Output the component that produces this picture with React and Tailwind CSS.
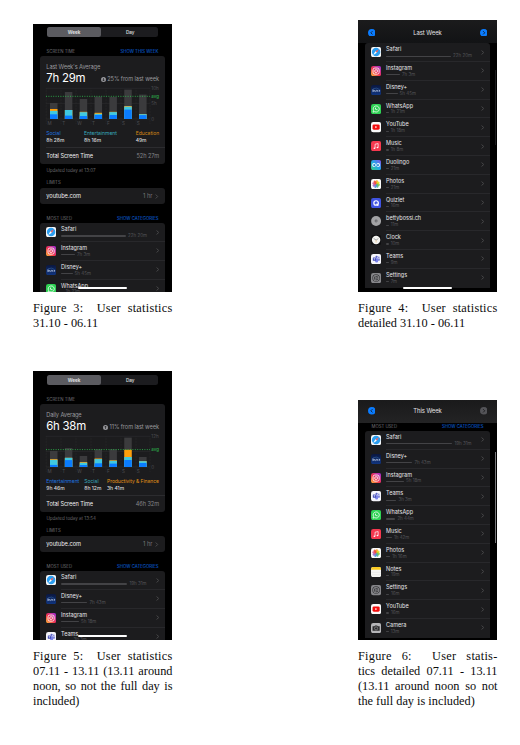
import React from "react";

const ICONS = {
  safari: (
    <>
      <rect width="20" height="20" rx="4.5" fill="#f4f6f8" />
      <circle cx="10" cy="10" r="8.3" fill="#2b9ff2" />
      <path d="M15.5 4.5 11.5 11.5 8.5 8.5z" fill="#f0625f" />
      <path d="M4.5 15.5 8.5 8.5l3 3z" fill="#fff" />
    </>
  ),
  instagram: (
    <>
      <rect width="20" height="20" rx="4.5" fill="url(#ig)" />
      <rect x="4" y="4" width="12" height="12" rx="3.6" fill="none" stroke="#fff" strokeWidth="1.6" />
      <circle cx="10" cy="10" r="2.8" fill="none" stroke="#fff" strokeWidth="1.6" />
      <circle cx="13.6" cy="6.4" r=".9" fill="#fff" />
    </>
  ),
  disney: (
    <>
      <rect width="20" height="20" rx="4.5" fill="url(#dis)" />
      <path d="M4 7.5Q11 4 17 9" fill="none" stroke="#4d8fd0" strokeWidth=".7" />
      <path d="M3.5 9v4.2c2.6 0 2.6-4 0-4M7 10v3M8.5 13h1.3v-2.6h1.4M12 13v-2.5q1.5 0 1.5 2.5M15 11.5h3M16.5 10v3" fill="none" stroke="#dbe9ff" strokeWidth="1.1" />
    </>
  ),
  whatsapp: (
    <>
      <rect width="20" height="20" rx="4.5" fill="#2fd254" />
      <path d="M4 16l1-3.3a6 6 0 1 1 2.3 2.3z" fill="none" stroke="#fff" strokeWidth="1.5" />
      <path d="M7.8 7.3c-.8 2.2 2.4 5.4 4.8 4.9l.4-1.2-1.6-.9-.8.7-1.4-1.4.6-.8-.7-1.5z" fill="#fff" />
    </>
  ),
  youtube: (
    <>
      <rect width="20" height="20" rx="4.5" fill="#fafafa" />
      <rect x="3" y="5" width="14" height="10" rx="2.6" fill="#f20d0d" />
      <path d="M8.5 7.8v4.4l3.8-2.2z" fill="#fff" />
    </>
  ),
  music: (
    <>
      <rect width="20" height="20" rx="4.5" fill="#f6384f" />
      <path d="M8 14V6.3l6-1.3v7.6" fill="none" stroke="#fff" strokeWidth="1.4" />
      <ellipse cx="6.7" cy="14.2" rx="1.8" ry="1.4" fill="#fff" />
      <ellipse cx="12.7" cy="12.8" rx="1.8" ry="1.4" fill="#fff" />
    </>
  ),
  duolingo: (
    <>
      <rect width="20" height="20" rx="4.5" fill="url(#duo)" />
      <rect x="2.5" y="6" width="6.8" height="7.5" rx="3" fill="#e9fbff" />
      <rect x="10.7" y="6" width="6.8" height="7.5" rx="3" fill="#e9fbff" />
      <rect x="4.6" y="7.8" width="3.4" height="4.4" rx="1.6" fill="#2a7fd0" />
      <rect x="12" y="7.8" width="3.4" height="4.4" rx="1.6" fill="#2a7fd0" />
    </>
  ),
  photos: (
    <>
      <rect width="20" height="20" rx="4.5" fill="#fafafa" />
      {["#f7a21b", "#e8d81f", "#8fc83e", "#4bb58d", "#4a90d9", "#9a6bc4", "#d65a9a", "#ee4b3a"].map((c, i) => (
        <rect key={c} x="7.7" y="2.4" width="4.6" height="7.4" rx="2.3" fill={c} opacity=".9" transform={`rotate(${i * 45 + 15} 10 10)`} />
      ))}
    </>
  ),
  quizlet: (
    <>
      <rect width="20" height="20" rx="4.5" fill="#4053e0" />
      <circle cx="10" cy="9.8" r="4.4" fill="none" stroke="#fff" strokeWidth="2.4" />
      <path d="M10.8 11.3l3.6 3.6" stroke="#fff" strokeWidth="2.4" />
    </>
  ),
  betty: (
    <>
      <circle cx="10" cy="10" r="9.8" fill="#a3a3a5" />
      <circle cx="10" cy="10" r="2.9" fill="#67676a" />
      <circle cx="10" cy="10" r="1.1" fill="#a3a3a5" />
    </>
  ),
  clock: (
    <>
      <rect width="20" height="20" rx="4.5" fill="#101012" />
      <circle cx="10" cy="10" r="8.3" fill="#f3f3f0" />
      <path d="M5.2 6.8 10 10l4.5-3" fill="none" stroke="#555" strokeWidth="1" />
      <path d="M10 10v5" stroke="#ec9a2c" strokeWidth=".7" />
    </>
  ),
  teams: (
    <>
      <rect width="20" height="20" rx="4.5" fill="#f5f5fb" />
      <circle cx="11" cy="5.6" r="2.2" fill="#5b63c9" />
      <circle cx="15.4" cy="6.4" r="1.5" fill="#6d75d4" />
      <path d="M8 8.5h6v5a3 3 0 0 1-6 0z" fill="#7b83eb" />
      <path d="M14.4 8.8H17v3.4a2 2 0 0 1-2.6 1z" fill="#5059c9" />
      <rect x="3.6" y="6.8" width="6.4" height="6.4" rx="1" fill="#454fb8" />
      <path d="M5.2 8.8h3.2M6.8 8.8v3" stroke="#fff" strokeWidth=".9" />
    </>
  ),
  settings: (
    <>
      <rect width="20" height="20" rx="4.5" fill="#86868a" />
      <circle cx="10" cy="10" r="7.4" fill="#38383b" />
      <circle cx="10" cy="10" r="5.4" fill="none" stroke="#a8a8ac" strokeWidth="1.3" />
      <circle cx="10" cy="10" r="2" fill="none" stroke="#a8a8ac" strokeWidth="1" />
      <path d="M12 10h3.4M9 8.3 7.3 5.3M9 11.7l-1.7 3" stroke="#a8a8ac" strokeWidth="1" />
    </>
  ),
  notes: (
    <>
      <rect width="20" height="20" rx="4.5" fill="#f7f7f5" />
      <path d="M0 5.5V4.5A4.5 4.5 0 0 1 4.5 0h11A4.5 4.5 0 0 1 20 4.5V5.5z" fill="#fbcb22" />
      <path d="M0 10.5h20M0 15h20" stroke="#dcdcdc" strokeWidth=".6" />
    </>
  ),
  camera: (
    <>
      <rect width="20" height="20" rx="4.5" fill="#b5b5b8" />
      <path d="M3 6.5h3.8L8 4.8h4l1.2 1.7H17v8.7H3z" fill="#2b2b2d" />
      <circle cx="10" cy="10.6" r="3.1" fill="none" stroke="#b5b5b8" strokeWidth="1" />
    </>
  ),
};

function AppIcon({ name }) {
  return (
    <svg viewBox="0 0 20 20" className="size-[10.2px] shrink-0">
      <defs>
        <linearGradient id="ig" x1="0" y1="1" x2="1" y2="0">
          <stop offset="0" stopColor="#fdbb3a" />
          <stop offset=".45" stopColor="#f0324f" />
          <stop offset="1" stopColor="#9a2ee0" />
        </linearGradient>
        <linearGradient id="dis" x1="0" y1="0" x2="0" y2="1">
          <stop offset="0" stopColor="#0a1740" />
          <stop offset="1" stopColor="#103580" />
        </linearGradient>
        <linearGradient id="duo" x1="0" y1="1" x2="1" y2="0">
          <stop offset="0" stopColor="#35d07a" />
          <stop offset=".5" stopColor="#23a7e8" />
          <stop offset="1" stopColor="#8a4bea" />
        </linearGradient>
      </defs>
      {ICONS[name]}
    </svg>
  );
}

function Chevron() {
  return (
    <svg viewBox="0 0 4 6" className="h-[5px] w-[3.4px] shrink-0">
      <path d="M.8.6 3.2 3 .8 5.4" fill="none" stroke="#5a5a5e" strokeWidth=".9" />
    </svg>
  );
}

function AppRow({ icon, name, bar, time, last }) {
  return (
    <div className="flex h-[18.8px] shrink-0 pl-[6px]">
      <div className="pt-[4px]">
        <AppIcon name={icon} />
      </div>
      <div className={`ml-[4.9px] flex grow items-center border-b-[0.6px] pr-[6px] ${last ? "border-transparent" : "border-[#28282b]"}`}>
        <div className="flex h-full grow flex-col pt-[3px]">
          <div className="h-[6.8px] text-[5.5px] leading-[7px] text-[#e8e8ea]">{name}</div>
          <div className="flex h-[6px] items-center gap-[2px]">
            <div className="h-[1.2px] rounded-full bg-[#434346]" style={{ width: bar }} />
            <span className="text-[4.5px] leading-[6px] text-[#545458]">{time}</span>
          </div>
        </div>
        <Chevron />
      </div>
    </div>
  );
}

function AppList({ rows }) {
  return (
    <div className="mx-[7px] flex flex-col overflow-hidden rounded-t-[3px] bg-[#1c1c1e]">
      {rows.map((r, i) => (
        <AppRow key={r[1]} icon={r[0]} name={r[1]} bar={r[2]} time={r[3]} last={i === rows.length - 1} />
      ))}
    </div>
  );
}

function HomeBar() {
  return <div className="absolute bottom-[3.2px] left-[45px] h-[1.8px] w-[49px] rounded-full bg-white" />;
}

function Chart({ bars, avg, top, mid }) {
  const days = ["M", "T", "W", "T", "F", "S", "S"];
  return (
    <svg viewBox="0 0 119 40" className="mt-[1px] block h-[40px] w-[119px] overflow-visible font-['Inter',sans-serif]">
      <g stroke="#303033" strokeWidth=".5">
        <path d="M0 2.3H104M0 17.6H104M0 33H104" />
        <path d="M.2 2.3V38M15 2.3V38M30 2.3V38M45 2.3V38M60 2.3V38M75 2.3V38M90 2.3V38M104 2.3V38" strokeDasharray="1 .5" />
      </g>
      {bars.map(([t, o, c, b], i) => {
        const x = 4 + i * 14.85;
        return (
          <g key={i}>
            <rect x={x} y={2.3 + t} width="7.5" height={30.7 - t} fill="#3b3b3d" />
            <rect x={x} y={2.3 + o} width="7.5" height={30.7 - o} fill="#ff9f0a" />
            <rect x={x} y={2.3 + c} width="7.5" height={30.7 - c} fill="#40c8e0" />
            <rect x={x} y={2.3 + b} width="7.5" height={30.7 - b} fill="#0a7cff" />
          </g>
        );
      })}
      <path d={`M0 ${2.3 + avg}H104`} stroke="#2fc24f" strokeWidth="1" strokeDasharray="1 1.4" opacity=".8" />
      <g fill="#4b4b4f" fontSize="4.6">
        {days.map((d, i) => (
          <text key={i} x={1.4 + i * 14.9} y="39.3">{d}</text>
        ))}
        <text x="105.3" y="4.2">{top}</text>
        {mid && <text x="105.3" y="19.3">{mid}</text>}
        <text x="105.3" y="34.8">0</text>
      </g>
      <text x="105.3" y={3.8 + avg} fontSize="4.4" fontWeight="600" fill="#2a9c45">avg</text>
    </svg>
  );
}

function SectionHead({ left, right, className }) {
  return (
    <div className={`flex h-[6px] items-center justify-between px-[13.5px] text-[4.3px] leading-[6px] ${className}`}>
      <span className="text-[#727276]">{left}</span>
      <span className="text-[#0a6ae0]">{right}</span>
    </div>
  );
}

function StatsPhone({ pad, link, avgTitle, avg, delta, chart, legend, total, updated, rows, height }) {
  return (
    <div className={`relative w-[139px] overflow-hidden bg-black font-['Inter',sans-serif] ${height} ${pad}`}>
      <div className="mx-[14px] flex h-[10px] rounded-[2.5px] bg-[#1c1c1f] text-center text-[4.7px] leading-[10px] tracking-[-0.05px] text-[#e6e6e8]">
        <div className="w-[54px] rounded-[2.5px] bg-[#5b5b60] font-semibold">Week</div>
        <div className="grow pl-[1.5px] font-medium">Day</div>
      </div>
      <SectionHead left="SCREEN TIME" right={link} className="mt-[11.9px]" />
      <div className="mx-[7px] mt-[1.3px] h-[107.6px] rounded-[3px] bg-[#1c1c1e] pl-[6.3px]">
        <div className="h-[8px] pt-[6.4px] text-[5.7px] leading-[8px] tracking-[-0.13px] text-[#98989d]">{avgTitle}</div>
        <div className="mt-[7px] flex h-[14px] items-center justify-between pr-[6px]">
          <span className="text-[11.4px] leading-[14px] tracking-[-0.25px] text-white">{avg}</span>
          <span className="flex items-center gap-[1.3px] pt-[2.6px] text-[5.6px] leading-[8px] tracking-[-0.05px] text-[#98989d]">
            <svg viewBox="0 0 10 10" className="size-[5px]">
              <circle cx="5" cy="5" r="5" fill="#98989d" />
              <path d={delta[1]} fill="none" stroke="#1c1c1e" strokeWidth="1.4" />
            </svg>
            {delta[0]}
          </span>
        </div>
        <Chart {...chart} />
        <div className="mt-[3.6px] flex text-[5px] leading-[7px]">
          {legend.map(([label, value, color, width]) => (
            <div key={label} className={`shrink-0 whitespace-nowrap ${width}`}>
              <div className={`h-[7.7px] ${color}`}>{label}</div>
              <div className="font-medium text-[#d8d8da]">{value}</div>
            </div>
          ))}
        </div>
        <div className="mt-[2.6px] flex h-[17.4px] items-center justify-between border-t-[0.6px] border-[#2c2c2f] pr-[6px] text-[5.6px] tracking-[-0.06px]">
          <span className="text-[#f0f0f2]">{"Total Screen Time"}</span>
          <span className="text-[#85858a]">{total}</span>
        </div>
      </div>
      <div className="mt-[3.8px] h-[6px] pl-[13.5px] text-[4.5px] leading-[6px] text-[#68686c]">{updated}</div>
      <SectionHead left="LIMITS" right="" className="mt-[6px]" />
      <div className="mx-[7px] mt-[2.2px] flex h-[16px] items-center rounded-[3px] bg-[#1c1c1e] px-[6.3px] pt-[0.8px] text-[5.7px] tracking-[-0.04px] text-[#f0f0f2]">
        <span className="grow">youtube.com</span>
        <span className="mr-[3px] text-[#77777b]">1 hr</span>
        <Chevron />
      </div>
      <SectionHead left="MOST USED" right="SHOW CATEGORIES" className="mt-[11.8px] mb-[1.6px]" />
      <AppList rows={rows} />
      <HomeBar />
    </div>
  );
}

function NavDot({ dir, active }) {
  return (
    <svg viewBox="0 0 16 16" className="size-[7.6px]">
      <circle cx="8" cy="8" r="8" fill={active ? "#0a7cff" : "#545458"} />
      <path d={dir === "left" ? "M9.5 4.5 6 8l3.5 3.5" : "M6.5 4.5 10 8l-3.5 3.5"} fill="none" stroke="#161618" strokeWidth="1.7" />
    </svg>
  );
}

function NavBar({ title, next, className }) {
  return (
    <div className={`flex items-center justify-between px-[9.7px] text-[5.9px] tracking-[-0.06px] text-[#e4e4e6] ${className}`}>
      <NavDot dir="left" active />
      <span className="pt-[1.4px]">{title}</span>
      <NavDot dir="right" active={next} />
    </div>
  );
}

function Caption({ lines, className }) {
  return (
    <div className={`w-[139.5px] font-['Liberation_Serif',serif] text-[12.3px] leading-[14.9px] text-[#0c0c0c] ${className}`}>
      {lines.map((line, i) => (
        <div key={line} className={`whitespace-nowrap ${i < lines.length - 1 ? "[text-align-last:justify]" : ""} ${i === 0 ? "tracking-[0.25px]" : ""}`}>
          {line}
        </div>
      ))}
    </div>
  );
}

const week1 = [
  ["safari", "Safari", 65, "22h 20m"],
  ["instagram", "Instagram", 14, "7h 3m"],
  ["disney", "Disney+", 11.5, "5h 45m"],
  ["whatsapp", "WhatsApp", 2.6, "1h 21m"],
  ["youtube", "YouTube", 2.6, "1h 18m"],
  ["music", "Music", 2.6, "1h 8m"],
  ["duolingo", "Duolingo", 2.6, "21m"],
  ["photos", "Photos", 2.6, "21m"],
  ["quizlet", "Quizlet", 2.6, "16m"],
  ["betty", "bettybossi.ch", 2.6, "11m"],
  ["clock", "Clock", 2.6, "10m"],
  ["teams", "Teams", 2.6, "9m"],
  ["settings", "Settings", 2.6, "7m"],
];

const week2 = [
  ["safari", "Safari", 66.3, "19h 31m"],
  ["disney", "Disney+", 26.4, "7h 43m"],
  ["instagram", "Instagram", 18, "5h 18m"],
  ["teams", "Teams", 10.3, "3h 3m"],
  ["whatsapp", "WhatsApp", 9.3, "2h 44m"],
  ["music", "Music", 5.8, "1h 42m"],
  ["photos", "Photos", 4.2, "1h 16m"],
  ["notes", "Notes", 2.8, "19m"],
  ["settings", "Settings", 2.8, "16m"],
  ["youtube", "YouTube", 2.8, "16m"],
  ["camera", "Camera", 2.6, "13m"],
];

// Each bar: distance from the chart's top to the grey, orange, cyan and blue segments.
const chart1 = {
  top: "10h",
  mid: "5h",
  avg: 8,
  bars: [
    [14.7, 20.7, 22.6, 26], [3.7, 21.7, 21.7, 27.3], [10.7, 23.5, 23.9, 27.7], [8.3, 24.5, 25.5, 26.7],
    [8.7, 23.5, 23.8, 26.7], [1.3, 17.7, 18.3, 21.3], [6.3, 25.7, 25.9, 26.8],
  ],
};
const chart2 = {
  top: "12h",
  avg: 13.3,
  bars: [
    [14.7, 22.8, 23.5, 28.6], [11.7, 21.5, 21.5, 23.8], [19.7, 25.7, 26.4, 28.7], [13, 22.2, 22.8, 27],
    [13, 24, 24.5, 27.3], [1.3, 13.5, 20.7, 23.7], [20.7, 24.7, 24.9, 26.7],
  ],
};

export default function App() {
  return (
    <div className="flex h-[745px] w-[520px] items-start overflow-hidden bg-white pl-[33px]">
      <div className="flex w-[139.5px] flex-col pt-[24px]">
        <StatsPhone
          height="h-[268px]"
          pad="pt-[3px]"
          link="SHOW THIS WEEK"
          avgTitle="Last Week's Average"
          avg="7h 29m"
          delta={["25% from last week", "M5 2.2V7.8M2.6 5.4 5 7.8 7.4 5.4"]}
          chart={chart1}
          legend={[
            ["Social", "8h 28m", "text-[#1d74e0]", "w-[37.7px]"],
            ["Entertainment", "8h 16m", "text-[#38aabd]", "w-[51.7px]"],
            ["Education", "49m", "text-[#d98a14]", "w-[25px]"],
          ]}
          total="52h 27m"
          updated="Updated today at 13:07"
          rows={week1.slice(0, 4)}
        />
        <Caption className="mt-[9px]" lines={["Figure 3:\u00a0 User statistics", "31.10 - 06.11"]} />
        <StatsPhone
          height="mt-[40.2px] h-[269px]"
          pad="pt-[4px]"
          link=""
          avgTitle="Daily Average"
          avg="6h 38m"
          delta={["11% from last week", "M5 7.8V2.2M2.6 4.6 5 2.2 7.4 4.6"]}
          chart={chart2}
          legend={[
            ["Entertainment", "9h 46m", "text-[#1d74e0]", "w-[38px]"],
            ["Social", "8h 12m", "text-[#38aabd]", "w-[22.7px]"],
            ["Productivity & Finance", "3h 41m", "tracking-[-0.05px] text-[#e09316]", "w-[53px]"],
          ]}
          total="46h 32m"
          updated="Updated today at 13:54"
          rows={week2.slice(0, 4)}
        />
        <Caption
          className="mt-[9px]"
          lines={["Figure 5:\u00a0 User statistics", "07.11 - 13.11 (13.11 around", "noon, so not the full day is", "included)"]}
        />
      </div>

      <div className="ml-[185.5px] flex w-[139.5px] flex-col pt-[20px]">
        <div className="relative h-[272px] w-[139px] overflow-hidden bg-black font-['Inter',sans-serif]">
          <div className="h-[23.3px] bg-linear-to-b from-[#1b1b1c] to-[#121315]">
            <NavBar title="Last Week" next className="h-[25px]" />
          </div>
          <AppList rows={week1} />
          <div className="absolute top-[50px] right-[1px] h-[75px] w-[1px] bg-[#1c1c1e]" />
          <HomeBar />
        </div>
        <Caption className="mt-[9px]" lines={["Figure 4:\u00a0 User statistics", "detailed 31.10 - 06.11"]} />
        <div className="relative mt-[69.2px] h-[240px] w-[139px] overflow-hidden bg-black font-['Inter',sans-serif]">
          <div className="h-[23px] bg-linear-to-b from-[#1a1a1b] to-[#232324]">
            <NavBar title="This Week" className="h-[21.6px]" />
          </div>
          <SectionHead left="MOST USED" right="SHOW CATEGORIES" className="mt-[0.9px] mb-[1.1px]" />
          <AppList rows={week2} />
          <div className="absolute top-[52px] right-[1px] h-[91px] w-[1px] bg-[#77777a]" />
        </div>
        <Caption
          className="mt-[9px]"
          lines={["Figure 6:\u00a0 User statis-", "tics detailed 07.11 - 13.11", "(13.11 around noon so not", "the full day is included)"]}
        />
      </div>
    </div>
  );
}
